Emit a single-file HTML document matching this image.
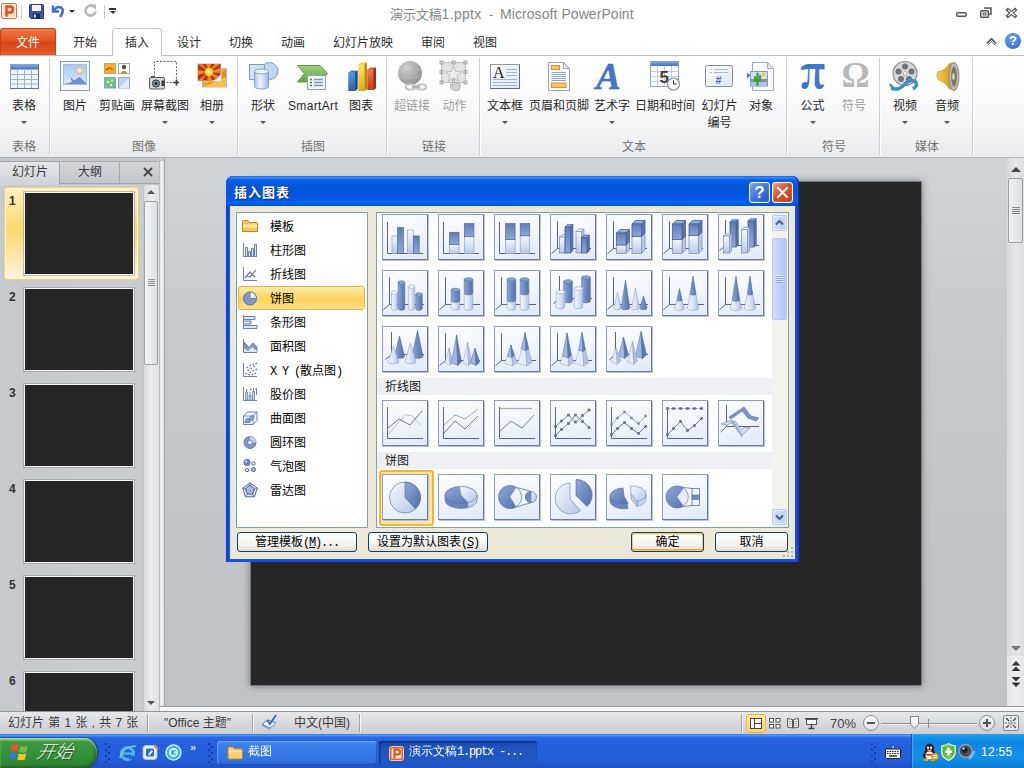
<!DOCTYPE html>
<html lang="zh-CN"><head><meta charset="utf-8"><title>演示文稿1.pptx - Microsoft PowerPoint</title>
<style>
*{box-sizing:border-box;margin:0;padding:0}
html,body{width:1024px;height:768px;overflow:hidden}
body{position:relative;background:#c6c9ce;font-family:"Liberation Sans","Noto Sans CJK SC",sans-serif;font-size:12px;color:#222}
.a{position:absolute}
svg{position:absolute;overflow:visible}
#titlebar{left:0;top:0;width:1024px;height:28px;background:#fff}
.ttl{left:390px;top:5px;font-size:13px;line-height:19px;color:#858585;white-space:pre}
#tabrow{left:0;top:28px;width:1024px;height:28px;background:#fff;border-bottom:1px solid #b9bcc1}
.tab{position:absolute;top:34px;line-height:18px;font-size:12px;color:#2a2a2a;white-space:nowrap;transform:translateX(-50%)}
#filetab{left:0;top:28px;width:56px;height:27px;background:linear-gradient(#f07a4a,#e2531f 45%,#d8431c 50%,#e55c25);border-radius:3px 3px 0 0;border:1px solid #c4441a;border-bottom:none}
#acttab{left:112px;top:28px;width:50px;height:28px;background:#fff;border:1px solid #c3c6cb;border-bottom:none;border-radius:4px 4px 0 0}
#ribbon{left:0;top:56px;width:1024px;height:102px;background:linear-gradient(#ffffff,#fcfcfd 40%,#f2f3f5 75%,#e8eaed);border-bottom:1px solid #aeb2b8}
.sep{position:absolute;top:58px;width:2px;height:97px;background:linear-gradient(90deg,#c9ccd1 50%,#fff 50%);opacity:.9}
.rl{position:absolute;top:98px;font-size:12px;color:#262626;white-space:nowrap;text-align:center;transform:translateX(-50%);line-height:16px}
.rl.dis{color:#9c9c9c}
.gl{position:absolute;top:139px;font-size:12px;color:#737373;white-space:nowrap;transform:translateX(-50%);line-height:16px}
.dd{position:absolute;top:121px;width:0;height:0;border-left:3px solid transparent;border-right:3px solid transparent;border-top:3px solid #555;margin-left:-3px}



#pane{left:0;top:158px;width:160px;height:554px;background:#c3c6cb}
#panetabs{left:0;top:161px;width:159px;height:23px;background:linear-gradient(#d3d5d9,#c3c6ca);border-top:1px solid #a9adb3;border-bottom:1px solid #a3a7ad}
#ptab1{left:0;top:161px;width:60px;height:24px;background:linear-gradient(#e4e6e9,#cfd2d6);border:1px solid #a0a4aa;border-left:none;border-bottom:none;border-radius:0 3px 0 0}
#ptab2{left:60px;top:162px;width:60px;height:22px;border-right:1px solid #a6aab0}
.ptx{position:absolute;top:164px;font-size:12px;line-height:16px;color:#3a3a3a;transform:translateX(-50%);white-space:nowrap}
#panebody{left:0;top:185px;width:143px;height:527px;background:linear-gradient(90deg,#c6c9ce,#c9ccd1)}
#panesb{left:143px;top:185px;width:16px;height:527px;background:linear-gradient(90deg,#d9dbdf,#e9ebee 50%,#dfe1e5);border-left:1px solid #c0c3c8}
#panesbthumb{left:144px;top:201px;width:14px;height:164px;border:1px solid #9da1a8;border-radius:2px;background:linear-gradient(90deg,#f4f5f7,#dcdfe3)}
#split{left:159px;top:161px;width:5px;height:546px;background:linear-gradient(90deg,#e3e5e8,#f2f3f5 40%,#dfe1e4);border-left:1px solid #b7bac0}
.thumb{position:absolute;left:24px;width:110px;height:83px;background:#262626;border:1px solid #f6f6f6;box-shadow:0 0 0 1px rgba(140,143,150,.55)}
.tnum{position:absolute;left:9px;font-size:12px;font-weight:bold;color:#333;line-height:13px;margin-top:1px}
#sel{left:4px;top:187px;width:135px;height:93px;border:1px solid #ecd27e;border-radius:3px;background:linear-gradient(#fdf0c0,#fbd970 45%,#f9e6a8 75%,#fdf6dd);box-shadow:inset 0 0 0 1px #fff6d8}
.tri{position:absolute;width:0;height:0;border-left:4px solid transparent;border-right:4px solid transparent}


#work{left:164px;top:158px;width:843px;height:549px;background:linear-gradient(#cfd2d6,#c6c9cd 30%,#c1c4c8 70%,#bfc2c6);border-left:1px solid #a2a5aa}
#workbot{left:160px;top:706px;width:864px;height:5px;background:#f6f7f8;border-top:1px solid #999ca1}
#slide{left:251px;top:182px;width:670px;height:503px;background:#262626;box-shadow:0 0 7px 1px rgba(50,52,60,.5),0 0 0 1px rgba(110,112,118,.6)}
#vsb{left:1007px;top:158px;width:17px;height:549px;background:linear-gradient(90deg,#d6d9dd,#e4e6e9 50%,#dcdee2)}
#vsbthumb{left:1008px;top:178px;width:15px;height:65px;border:1px solid #9a9ea5;border-radius:2px;background:linear-gradient(90deg,#f1f2f4,#dcdfe3)}
#vsbnav{left:1007px;top:656px;width:17px;height:51px;background:linear-gradient(90deg,#e1e3e6,#eceef0 50%,#e3e5e8)}


#status{left:0;top:711px;width:1024px;height:23px;background:linear-gradient(#e6e7ea,#d9dbde 45%,#cbcdd0);border-top:1px solid #909398}
.st{position:absolute;top:715px;font-size:12px;line-height:17px;color:#3a3a3a;white-space:pre}
.ssep{position:absolute;top:714px;width:2px;height:18px;background:linear-gradient(90deg,#9fa3a9 50%,#f4f5f6 50%)}
#vsel{left:746px;top:714px;width:20px;height:19px;border:1px solid #e5bd4e;border-radius:2px;background:linear-gradient(#fde9a6,#fbd467)}
.circ{position:absolute;width:16px;height:16px;border-radius:8px;border:1px solid #8a8e95;background:linear-gradient(#fdfdfd,#d9dbdf)}


#taskbar{left:0;top:734px;width:1024px;height:34px;background:linear-gradient(#3d83ee 0,#2b6ce4 3px,#245edb 8px,#2560dc 24px,#1f52c4 34px)}
#tbtop{left:0;top:734px;width:1024px;height:3px;background:linear-gradient(#3a7be8,#4e92f3 50%,#3173e6)}
#start{left:0;top:738px;width:97px;height:30px;border-radius:0 12px 12px 0/0 15px 15px 0;background:linear-gradient(#5dab5b 0,#3f9a3e 12%,#35913a 50%,#2f8a35 80%,#2a7a30);box-shadow:inset 0 2px 2px rgba(190,235,180,.7),inset -2px -1px 3px rgba(20,70,20,.6),1px 0 2px rgba(0,0,40,.5)}
#starttx{left:37px;top:740px;font-size:18px;line-height:24px;color:#fff;font-style:italic;transform:skewX(-12deg);text-shadow:1px 1px 1px rgba(0,0,0,.5);white-space:nowrap;font-family:"Liberation Sans","Noto Sans CJK SC",sans-serif;font-weight:300}
.tbtn{position:absolute;top:741px;height:24px;border-radius:3px;color:#fff;font-size:12px;line-height:22px;white-space:pre;font-family:"Liberation Mono","WenQuanYi Zen Hei","Noto Sans CJK SC",monospace}
#tb1{left:217px;width:160px;background:linear-gradient(#4a8df2,#3a7de8 20%,#3273e2 80%,#2a65d4);box-shadow:inset 1px 1px 1px rgba(255,255,255,.25),inset -1px -1px 1px rgba(0,0,60,.25)}
#tb2{left:379px;width:158px;background:linear-gradient(#1a4aa8,#1f54bd 30%,#2259c4);box-shadow:inset 1px 1px 2px rgba(0,0,50,.5)}
#tray{left:911px;top:734px;width:113px;height:34px;background:linear-gradient(#1fa0ee 0,#1593e9 3px,#0f86e0 8px,#1290e8 24px,#0e7bd0 34px);border-left:1px solid #0b5cb0;box-shadow:inset 1px 0 1px rgba(120,200,255,.5)}
#clock{left:981px;top:745px;font-size:12px;line-height:14px;color:#fff;white-space:nowrap;letter-spacing:.3px}
.dots{position:absolute;top:743px;width:2px;height:22px;background:repeating-linear-gradient(#173fa0 0,#173fa0 2px,transparent 2px,transparent 6px)}
.dots.b{margin-left:3px;margin-top:3px;height:19px}


.hw{letter-spacing:-1.2px}
#dlg{left:226px;top:176px;width:573px;height:386px;border-radius:8px 8px 0 0;background:linear-gradient(90deg,#0a35d8,#1450e4 3px,#1450e4 570px,#0a35d8)}
#dlgtitle{left:226px;top:176px;width:573px;height:30px;border-radius:7px 7px 0 0;background:linear-gradient(#0a5fe9 0,#3b8cf5 4%,#0a5de6 14%,#0553d8 40%,#0457e2 70%,#0661ee 88%,#0352d0 100%);box-shadow:inset 1px 0 0 #1f4fd8,inset -1px 0 0 #0a2fb5}
#dlgtx{left:234px;top:183.5px;font-size:13px;font-weight:bold;color:#fff;line-height:18px;text-shadow:1px 1px 1px #0a2a7a;white-space:nowrap;letter-spacing:1px}
#dlgbody{left:230px;top:206px;width:565px;height:353px;background:#ece9d8}
.tbb{position:absolute;top:182px;width:21px;height:21px;border:1px solid #fff;border-radius:3px}
#dhelp{left:749px;background:linear-gradient(135deg,#7aa6f2,#3a72e2 50%,#2457cc);box-shadow:inset 0 0 2px rgba(255,255,255,.3)}
#dclose{left:772px;background:linear-gradient(135deg,#f0a088,#d8502c 45%,#c23a18);box-shadow:inset 0 0 2px rgba(255,255,255,.3)}
#llist{left:236px;top:212px;width:132px;height:316px;background:#fff;border:1px solid #7f9db9}
#gal{left:376px;top:212px;width:413px;height:316px;background:#fff;border:1px solid #7f9db9}
.li{position:absolute;left:270px;font-size:12px;line-height:16px;color:#000;white-space:pre;font-family:"Liberation Mono","Noto Sans CJK SC",monospace}
#lsel{left:238px;top:286px;width:127px;height:24px;border:1px solid #e3b648;border-radius:3px;background:linear-gradient(#fde9a8,#fbd768 50%,#fbd25a 55%,#fce08a)}
.gi{position:absolute;width:46px;height:46px;border:1px solid #8e9bc2;border-right-color:#6b79a8;border-bottom-color:#6b79a8;background:linear-gradient(165deg,#fcfdff,#f1f5fc 50%,#e0e9f7);box-shadow:1px 1px 0 #b9c1d8}
.gi svg{left:-1px;top:-1px}
.gh{position:absolute;left:377px;width:395px;height:17px;background:#eff0f4;font-size:12px;line-height:19px;padding-left:8px;color:#1a1a1a;font-family:"Liberation Sans","Noto Sans CJK SC",sans-serif}
#gsel{left:379px;top:470px;width:55px;height:56px;border:2px solid #efb738;border-radius:3px;background:#fce69c}
#gsb{left:772px;top:213px;width:16px;height:314px;background:#f3f2ea}
.sbtn{position:absolute;left:772px;width:15px;height:16px;border:1px solid #b8c8ee;border-radius:2px;background:linear-gradient(90deg,#d5e0fa,#bccdf6);box-shadow:inset 0 0 0 1px #e6edfc}
#gsbthumb{left:772px;top:238px;width:15px;height:82px;border:1px solid #b4c5ee;border-radius:2px;background:linear-gradient(90deg,#d3defa,#bccdf6 60%,#b3c5f2)}
.btn{position:absolute;top:532px;height:20px;border:1px solid #0f3d78;border-radius:3px;background:linear-gradient(#ffffff,#f4f3ee 60%,#e2dfd2);font-size:12px;line-height:20px;text-align:center;color:#000;white-space:pre;font-family:"Liberation Mono","Noto Sans CJK SC",monospace}
#bok{box-shadow:inset 0 0 0 1px #f3c960,inset 0 -2px 0 0 #e8a52e,inset 0 2px 0 0 #fde8a8}

</style></head><body>
<div id="titlebar" class="a"></div>
<div class="a ttl"><span style="letter-spacing:-.1px">演示文稿</span><span style="font-size:14px;letter-spacing:.3px">1.pptx</span></div>
<div class="a ttl" style="left:489px">-</div>
<div class="a ttl" style="left:500px;font-size:14px;letter-spacing:.07px">Microsoft PowerPoint</div>
<div id="tabrow" class="a"></div>
<div id="filetab" class="a"></div>
<div id="acttab" class="a"></div>
<div class="tab" style="left:28px;color:#fff">文件</div>
<div class="tab" style="left:85px">开始</div>
<div class="tab" style="left:137px">插入</div>
<div class="tab" style="left:189px">设计</div>
<div class="tab" style="left:241px">切换</div>
<div class="tab" style="left:293px">动画</div>
<div class="tab" style="left:363px">幻灯片放映</div>
<div class="tab" style="left:433px">审阅</div>
<div class="tab" style="left:485px">视图</div>
<div id="ribbon" class="a"></div>
<div class="sep" style="left:49px"></div>
<div class="sep" style="left:237px"></div>
<div class="sep" style="left:386px"></div>
<div class="sep" style="left:479px"></div>
<div class="sep" style="left:786px"></div>
<div class="sep" style="left:879px"></div>
<div class="sep" style="left:972px"></div>
<div class="rl" style="left:24px">表格</div>
<div class="dd" style="left:24px"></div>
<div class="rl" style="left:75px">图片</div>
<div class="rl" style="left:117px">剪贴画</div>
<div class="rl" style="left:165px">屏幕截图</div>
<div class="dd" style="left:165px"></div>
<div class="rl" style="left:212px">相册</div>
<div class="dd" style="left:212px"></div>
<div class="rl" style="left:263px">形状</div>
<div class="dd" style="left:263px"></div>
<div class="rl" style="left:313px"><span style="letter-spacing:.35px">SmartArt</span></div>
<div class="rl" style="left:361px">图表</div>
<div class="rl dis" style="left:412px">超链接</div>
<div class="rl dis" style="left:454.5px">动作</div>
<div class="rl" style="left:505px">文本框</div>
<div class="dd" style="left:505px"></div>
<div class="rl" style="left:559px">页眉和页脚</div>
<div class="rl" style="left:612px">艺术字</div>
<div class="dd" style="left:612px"></div>
<div class="rl" style="left:665px">日期和时间</div>
<div class="rl" style="left:719.5px"><span style="line-height:17px">幻灯片<br>编号</span></div>
<div class="rl" style="left:761px">对象</div>
<div class="rl" style="left:812.5px">公式</div>
<div class="dd" style="left:812.5px"></div>
<div class="rl dis" style="left:854px">符号</div>
<div class="rl" style="left:905px">视频</div>
<div class="dd" style="left:905px"></div>
<div class="rl" style="left:947px">音频</div>
<div class="dd" style="left:947px"></div>
<div class="gl" style="left:24px">表格</div>
<div class="gl" style="left:144px">图像</div>
<div class="gl" style="left:313px">插图</div>
<div class="gl" style="left:434px">链接</div>
<div class="gl" style="left:634px">文本</div>
<div class="gl" style="left:834px">符号</div>
<div class="gl" style="left:927px">媒体</div>
<svg width="0" height="0" style="left:0;top:0"><defs>
<linearGradient id="sky" x1="0" y1="0" x2="0" y2="1"><stop offset="0" stop-color="#9fcbf2"/><stop offset="1" stop-color="#d9ecfb"/></linearGradient>
<linearGradient id="blu" x1="0" y1="0" x2="0" y2="1"><stop offset="0" stop-color="#7aa7e0"/><stop offset="1" stop-color="#3f6fc0"/></linearGradient>
<linearGradient id="cylg" x1="0" y1="0" x2="1" y2="0"><stop offset="0" stop-color="#a9c6ea"/><stop offset=".4" stop-color="#eef5fd"/><stop offset="1" stop-color="#9dbbe4"/></linearGradient>
<radialGradient id="glob" cx=".35" cy=".3" r=".8"><stop offset="0" stop-color="#d0d0d0"/><stop offset="1" stop-color="#8e8e8e"/></radialGradient>
<linearGradient id="grn" x1="0" y1="0" x2="0" y2="1"><stop offset="0" stop-color="#9fd07c"/><stop offset="1" stop-color="#5fa548"/></linearGradient>
<linearGradient id="gold" x1="0" y1="0" x2="1" y2="0"><stop offset="0" stop-color="#f3cf63"/><stop offset=".5" stop-color="#e8a92a"/><stop offset="1" stop-color="#c98a1a"/></linearGradient>
<linearGradient id="pg" x1="0" y1="0" x2="1" y2="1"><stop offset="0" stop-color="#ffffff"/><stop offset="1" stop-color="#dbe6f5"/></linearGradient>
<linearGradient id="cb" x1="0" y1="0" x2="0" y2="1"><stop offset="0" stop-color="#5a98dc"/><stop offset="1" stop-color="#2a5fa5"/></linearGradient>
<linearGradient id="cy" x1="0" y1="0" x2="0" y2="1"><stop offset="0" stop-color="#fbe368"/><stop offset="1" stop-color="#e3a91a"/></linearGradient>
<linearGradient id="cr" x1="0" y1="0" x2="0" y2="1"><stop offset="0" stop-color="#f0774a"/><stop offset="1" stop-color="#c63a18"/></linearGradient>
</defs></svg>
<svg style="left:1px;top:3px" width="16" height="16" viewBox="0 0 16 16"><rect x=".5" y=".5" width="15" height="15" rx="1.500" fill="#fdf1e8" stroke="#d9703c"/><rect x="2" y="2" width="12" height="12" fill="#f9d9c2"/><path d="M5.500 13.500V3.500H9Q12 3.500 12 6.500T9 9.500H5.500" fill="none" stroke="#d4511c" stroke-width="2.400"/></svg>
<div class="a" style="left:21px;top:5px;width:1px;height:14px;background:#c9ccd0"></div>
<svg style="left:29px;top:4px" width="15" height="15" viewBox="0 0 15 15"><path d="M.5 1.500Q.5 .5 1.500 .5H13.500Q14.500 .5 14.500 1.500V14.500H2L.5 13z" fill="#3f55a8" stroke="#2a3a80"/><rect x="3" y="1" width="9" height="6" fill="#f4f6fb"/><rect x="4" y="9.500" width="7" height="5" fill="#1f2a5c"/><rect x="5" y="10.500" width="2" height="3" fill="#cfd6ee"/></svg>
<svg style="left:51px;top:4px" width="14" height="14" viewBox="0 0 14 14"><path d="M2 1.500V7.500H8" fill="none" stroke="#3f6fd0" stroke-width="2.400"/><path d="M2.500 7Q6 1.500 10 3.500Q14 6.500 9 13" fill="none" stroke="#3f6fd0" stroke-width="2.600"/></svg>
<div class="dd" style="left:72px;top:10px;border-top-color:#333"></div>
<svg style="left:84px;top:4px" width="13" height="14" viewBox="0 0 13 14"><path d="M9.800 2.800A5 5 0 1 0 11.500 7.500" fill="none" stroke="#b4b7bc" stroke-width="2.600"/><path d="M6.500 .5H12V6z" fill="#b4b7bc"/></svg>
<div class="a" style="left:104px;top:5px;width:1px;height:14px;background:#c9ccd0"></div>
<div class="a" style="left:109px;top:8px;width:7px;height:1.500px;background:#333"></div><div class="dd" style="left:112.500px;top:11px;border-top-color:#333"></div>
<svg style="left:955px;top:5px" width="64" height="14" viewBox="0 0 64 14"><rect x="1.700" y="7.700" width="9.600" height="3.600" rx="1.200" fill="#fff" stroke="#555" stroke-width="1.400"/><path d="M29 3H36V9H33.500" fill="none" stroke="#555" stroke-width="1.500"/><rect x="25.700" y="5.700" width="7.600" height="6.600" rx=".8" fill="#fff" stroke="#555" stroke-width="1.400"/><rect x="28" y="8" width="3" height="2" fill="none" stroke="#555" stroke-width="1"/><path d="M53 5L60 11M60 5L53 11" stroke="#555" stroke-width="3.600" stroke-linecap="square"/><path d="M53.300 5.300L59.700 10.700M59.700 5.300L53.300 10.700" stroke="#fff" stroke-width="1.200" stroke-linecap="square"/></svg>
<svg style="left:986px;top:37px" width="11" height="9" viewBox="0 0 11 9"><path d="M1.500 7L5.500 2.500L9.500 7" fill="none" stroke="#555" stroke-width="2.800" stroke-linejoin="round"/><path d="M2.200 6.800L5.500 3.300L8.800 6.800" fill="none" stroke="#fff" stroke-width="1" stroke-linejoin="round"/></svg>
<div class="a" style="left:1005px;top:33px;width:16px;height:16px;border-radius:8px;background:radial-gradient(circle at 40% 30%,#6fa0e8,#2f66c4);color:#fff;font-weight:bold;font-size:13px;line-height:16px;text-align:center">?</div>
<svg style="left:10px;top:64px" width="29" height="25" viewBox="0 0 29 25"><rect x=".5" y=".5" width="28" height="24" fill="#f1f5fb" stroke="#8fa1c4"/><rect x="1" y="1" width="27" height="4.500" fill="url(#blu)"/><path d="M1 10.500H28M1 15.500H28M1 20H28M7.500 5.500V24M14.500 5.500V24M21.500 5.500V24" stroke="#9eb0d0" stroke-width="1"/><path d="M.5 24.500H28.500V.5" fill="none" stroke="#5c6f9c"/></svg>
<svg style="left:60px;top:61px" width="30" height="30" viewBox="0 0 30 30"><rect x=".5" y=".5" width="29" height="29" fill="#f4f8fc" stroke="#8c9bb5"/><rect x="3.500" y="3.500" width="23" height="20" fill="url(#sky)" stroke="#a9bcd8"/><circle cx="19.500" cy="9.500" r="3" fill="#fde7c4" stroke="#f2a57a"/><path d="M4 23L10 15.500L14 19.500L19.500 16L26 22V23z" fill="#6f8fcf"/><path d="M4 23L10 15.500L12 21z" fill="#dfe8f6"/></svg>
<svg style="left:104px;top:63px" width="26" height="26" viewBox="0 0 26 26"><rect x=".5" y=".5" width="11" height="10" fill="#f6b21e" stroke="#b9a27a"/><path d="M2 7L6 4.500L9 7" stroke="#e2502a" stroke-width="1.600" fill="none"/><rect x="14.500" y=".5" width="11" height="10" fill="#fbfcfe" stroke="#9aa6bb"/><circle cx="20" cy="4" r="2.200" fill="#6b4a36"/><path d="M16 10.500Q20 5 24 10.500z" fill="#e8862c"/><rect x=".5" y="14.500" width="11" height="10.500" fill="#6fbf9a" stroke="#8aa6a0"/><path d="M3 18h2v2h-2zM7 16.500h2v2h-2zM6 21h2v2h-2z" fill="#f3ef8a"/><rect x="14.500" y="14.500" width="11" height="10.500" fill="#b9d2f3" stroke="#9aa6bb"/><path d="M15 25L25 15V25z" fill="#dce9fa"/></svg>
<svg style="left:149px;top:61px" width="31" height="29" viewBox="0 0 31 29"><path d="M5.500 16V.5H27.500V21.500H16" fill="none" stroke="#666" stroke-width="1" stroke-dasharray="2 1.500"/><path d="M24 21.500H30M27.500 18.500V24.500" stroke="#333" stroke-width="1.600"/><rect x=".5" y="16.500" width="15" height="11.500" rx="1.500" fill="#d7d9dd" stroke="#55585e"/><rect x="2" y="15" width="4" height="2" fill="#55585e"/><circle cx="7" cy="22.500" r="3.600" fill="#8c96a8" stroke="#33363c"/><circle cx="7" cy="22.500" r="1.500" fill="#1c1e22"/><rect x="12.500" y="19.500" width="2.500" height="5.500" fill="#33363c"/></svg>
<svg style="left:197px;top:63px" width="30" height="25" viewBox="0 0 30 25"><rect x="5.500" y="5.500" width="24" height="18.500" fill="#f0a62c" stroke="#b9bcc4"/><path d="M6 24L29 6V24z" fill="#e58e1c"/><path d="M6 24L29 14V24z" fill="#f6c04a"/><rect x=".5" y=".5" width="23.500" height="17.500" fill="#b8321a" stroke="#d5d7dc"/><path d="M12 9L1 1H5zM12 9L9 1H14zM12 9L18 1H23zM12 9L23.500 5V10zM12 9L23.500 14V17.500H20zM12 9L15 17.500H10zM12 9L5 17.500H1zM12 9L1 12V7z" fill="#f0861e"/><circle cx="12" cy="9" r="4.200" fill="#f8dc2a"/><circle cx="11.500" cy="8.500" r="2" fill="#fdf2a0"/><path d="M24 11V18H14.500Q20.500 17 24 11z" fill="#f4f4f4" stroke="#c9ccd2" stroke-width=".6"/></svg>
<svg style="left:249px;top:62px" width="30" height="28" viewBox="0 0 30 28"><circle cx="20.500" cy="9" r="8.500" fill="#c3d6f0" stroke="#8099c4"/><rect x=".5" y="2.500" width="15" height="15" fill="#d3e1f4" stroke="#8099c4"/><path d="M5.500 9.500V24.500A7 2.500 0 0 0 19.500 24.500V9.500z" fill="url(#cylg)" stroke="#7f9fd0"/><ellipse cx="12.500" cy="9.500" rx="7" ry="2.500" fill="#eef5fd" stroke="#7f9fd0"/></svg>
<svg style="left:297px;top:65px" width="31" height="25" viewBox="0 0 31 25"><path d="M.5 .5H23L30.500 8.500L23 17H.5L7.500 8.500z" fill="url(#grn)" stroke="#5a9a45"/><rect x="10.500" y="10.500" width="18" height="14" fill="#f2f6f3" stroke="#8fa3ad"/><path d="M13 14.500h2M13 17.500h2M13 20.500h2" stroke="#4a7a48" stroke-width="1.400"/><path d="M17 14.500h9M17 17.500h9M17 20.500h9" stroke="#7f98b4" stroke-width="1.400"/></svg>
<svg style="left:348px;top:62px" width="28" height="29" viewBox="0 0 28 29"><path d="M.5 10.500L3.500 8.500H9.500V27L7 29H.5z" fill="#3b78c0"/><path d="M.5 10.500H7V29H.5z" fill="url(#cb)"/><path d="M7 10.500L9.500 8.500V27L7 29z" fill="#1f4c86"/><path d="M10.500 2.500L13.500 .5H19V27L16.500 29H10.500z" fill="#f2c82a"/><path d="M10.500 2.500H16.500V29H10.500z" fill="url(#cy)"/><path d="M16.500 2.500L19 .5V27L16.500 29z" fill="#b88a10"/><path d="M19.500 7.500L22.500 5.500H28V26L25.500 28H19.500z" fill="#e0532a"/><path d="M19.500 7.500H25.500V28H19.500z" fill="url(#cr)"/><path d="M25.500 7.500L28 5.500V26L25.500 28z" fill="#9c2c12"/></svg>
<svg style="left:397px;top:61px" width="30" height="30" viewBox="0 0 30 30"><circle cx="13" cy="12" r="12" fill="url(#glob)"/><path d="M3 8Q13 14 23 8M2 15Q13 20 24 15" fill="none" stroke="#b9b9b9" stroke-width=".8"/><rect x="9" y="23.500" width="9" height="5" rx="2.500" fill="none" stroke="#c4c4c4" stroke-width="2.200"/><rect x="20" y="23.500" width="9" height="5" rx="2.500" fill="none" stroke="#c4c4c4" stroke-width="2.200"/><path d="M15 26H23" stroke="#b0b0b0" stroke-width="2"/></svg>
<svg style="left:440px;top:61px" width="27" height="30" viewBox="0 0 27 30"><rect x="1.500" y="1.500" width="24" height="20" fill="#e3e3e3" stroke="#a9a9a9" stroke-dasharray="2 1"/><path d="M13.500 5L15.800 10.500L21.500 11L17 14.500L18.500 20L13.500 17L8.500 20L10 14.500L5.500 11L11.200 10.500z" fill="#ececec" stroke="#bdbdbd"/><g fill="#d8d8d8" stroke="#9a9a9a" stroke-width=".8"><rect x="0" y="0" width="3" height="3"/><rect x="12" y="0" width="3" height="3"/><rect x="24" y="0" width="3" height="3"/><rect x="0" y="9.500" width="3" height="3"/><rect x="24" y="9.500" width="3" height="3"/><rect x="0" y="20" width="3" height="3"/><rect x="24" y="20" width="3" height="3"/></g><path d="M12.500 18.500V24L10.500 23V26.500Q12 29.500 15 29.500H18Q20 29 20 25.500V22.500L14.500 21.500V18.500Q13.500 17.500 12.500 18.500z" fill="#d0d0d0" stroke="#a6a6a6" stroke-width=".8"/></svg>
<svg style="left:490px;top:64px" width="30" height="25" viewBox="0 0 30 25"><rect x=".5" y=".5" width="29" height="24" fill="url(#pg)" stroke="#8c98b4"/><path d="M.5 24.500H29.500V.5" fill="none" stroke="#5f6b8c"/><text x="3" y="13.500" font-family="Liberation Serif,serif" font-size="16" fill="#1a1a1a">A</text><path d="M16 5.500H27M16 8.500H27M16 11.500H27M3 15.500H27M3 18.500H27M3 21.500H27" stroke="#9db2d4" stroke-width="1"/></svg>
<svg style="left:548px;top:62px" width="22" height="29" viewBox="0 0 22 29"><path d="M.5 .5H15.500L21.500 6.500V28.500H.5z" fill="#fbfcfe" stroke="#9aa3b5"/><path d="M15.500 .5V6.500H21.500z" fill="#e3e7ee" stroke="#9aa3b5"/><rect x="3.500" y="3.500" width="8" height="4" fill="#f8c46a" stroke="#e0902a"/><rect x="3.500" y="21" width="14.500" height="4.500" fill="#f8c46a" stroke="#e0902a"/><path d="M3.500 10.500H18M3.500 12.500H18M3.500 14.500H18M3.500 16.500H18M3.500 18.500H18" stroke="#8ea6cf" stroke-width="1"/></svg>
<svg style="left:597px;top:61px" width="26" height="30" viewBox="0 0 26 30"><text x="-1" y="28" font-family="Liberation Serif,serif" font-size="37" font-style="italic" font-weight="bold" fill="#3f78c9" stroke="#2c5ea8" stroke-width=".5">A</text></svg>
<svg style="left:650px;top:61px" width="30" height="30" viewBox="0 0 30 30"><rect x=".5" y=".5" width="28" height="25" fill="#fff" stroke="#8fa1c4"/><rect x="1" y="1" width="27" height="4" fill="url(#blu)"/><path d="M1 10.500H28M1 15.500H28M1 20.500H28M7.500 5V25M14.500 5V25M21.500 5V25" stroke="#c3cde0"/><text x="9.500" y="21.500" font-family="Liberation Sans,sans-serif" font-size="17" font-weight="bold" fill="#3c3c3c">5</text><circle cx="23.500" cy="23" r="6" fill="#f7f7f7" stroke="#8a8d94" stroke-width="1.200"/><path d="M23.500 19.500V23H26.500" fill="none" stroke="#333" stroke-width="1"/></svg>
<svg style="left:705px;top:65px" width="28" height="22" viewBox="0 0 28 22"><rect x=".5" y=".5" width="27" height="21" rx="2" fill="url(#pg)" stroke="#7f8aa6"/><path d="M5 4.500H7M9 4.500H23M5 7.500H7M9 7.500H23" stroke="#a9b8d4"/><text x="10.500" y="18.500" font-family="Liberation Sans,sans-serif" font-size="11" font-weight="bold" fill="#4d6ea8">#</text></svg>
<svg style="left:747px;top:62px" width="27" height="29" viewBox="0 0 27 29"><path d="M5.500 .5H20.500L26.500 6.500V28.500H5.500z" fill="#f6f9fd" stroke="#a3adbf"/><path d="M20.500 .5V6.500H26.500z" fill="#dfe5ef" stroke="#a3adbf"/><rect x="3.500" y="9.500" width="17" height="14.500" fill="#cfe3f7" stroke="#8c9bb5"/><rect x="4" y="17" width="16" height="3" fill="#8d8f96"/><rect x="4" y="20" width="16" height="3.500" fill="#a7c4e6"/><circle cx="16.500" cy="12.500" r="2" fill="#f2c94a"/><path d="M10.500 23V11.500M8 18.500V15M13 17.500V14M8 18.500H13" stroke="#3f9a3a" stroke-width="2.200" fill="none" stroke-linecap="round"/><path d="M0 10.500L3.500 13.500L0 16.500z" fill="#3f78c9"/></svg>
<svg style="left:800px;top:62px" width="26" height="28" viewBox="0 0 26 28"><text x="0" y="26" font-family="Noto Serif CJK SC,serif" font-size="43" font-weight="900" textLength="25.5" lengthAdjust="spacingAndGlyphs" fill="#3f78c9">π</text></svg>
<svg style="left:842px;top:64px" width="26" height="24" viewBox="0 0 26 24"><text x="-.5" y="23" font-family="Liberation Serif,DejaVu Serif,serif" font-size="35" font-weight="bold" fill="#b8b8b8">Ω</text></svg>
<svg style="left:889px;top:61px" width="31" height="30" viewBox="0 0 31 30"><circle cx="16" cy="12.500" r="12" fill="#d6d7da" stroke="#8b8d92" stroke-width="1.200"/><circle cx="16" cy="12.500" r="2" fill="#eee" stroke="#999" stroke-width=".6"/><g fill="#6f7278"><circle cx="16" cy="5.500" r="3"/><circle cx="9.500" cy="10.500" r="3"/><circle cx="22.500" cy="10.500" r="3"/><circle cx="12" cy="18" r="3"/><circle cx="20" cy="18" r="3"/></g><path d="M2 27.500Q10 30 16 23Q21 17.500 26 20.500Q30 24 24 28" fill="none" stroke="#3c8fc8" stroke-width="3.400"/><path d="M1 23Q4 29 10 28" fill="none" stroke="#3c8fc8" stroke-width="2.600"/></svg>
<svg style="left:936px;top:62px" width="24" height="29" viewBox="0 0 24 29"><path d="M1 13Q1 9 4.500 9Q8 9 13.500 1.500L19 .5Q17 14 19 28.500L13.500 27Q8 19 4.500 19Q1 18 1 13z" fill="url(#gold)" stroke="#c48a1c" stroke-width=".6"/><ellipse cx="18" cy="14.500" rx="5" ry="14" fill="#b9b9ad" stroke="#8e8e80"/><ellipse cx="18" cy="14.500" rx="2.800" ry="10" fill="#77776c"/><ellipse cx="17.500" cy="14.500" rx="1.200" ry="3.500" fill="#d9d9cc"/></svg>
<div id="pane" class="a"></div><div id="panebody" class="a"></div>
<div id="panetabs" class="a"></div><div id="ptab1" class="a"></div><div id="ptab2" class="a"></div>
<div class="ptx" style="left:30px">幻灯片</div><div class="ptx" style="left:90px">大纲</div>
<svg style="left:143px;top:167px" width="10" height="10" viewBox="0 0 10 10"><path d="M1 1L9 9M9 1L1 9" stroke="#444" stroke-width="1.8" fill="none"/></svg>
<div id="sel" class="a"></div>
<div class="thumb" style="top:192px;height:83px"></div><div class="tnum" style="top:194px">1</div>
<div class="thumb" style="top:288px;height:83px"></div><div class="tnum" style="top:290px">2</div>
<div class="thumb" style="top:384px;height:83px"></div><div class="tnum" style="top:386px">3</div>
<div class="thumb" style="top:480px;height:83px"></div><div class="tnum" style="top:482px">4</div>
<div class="thumb" style="top:576px;height:83px"></div><div class="tnum" style="top:578px">5</div>
<div class="thumb" style="top:672px;height:40px"></div><div class="tnum" style="top:674px">6</div>
<div id="panesb" class="a"></div><div id="panesbthumb" class="a"></div>
<div class="tri" style="left:147px;top:190px;border-bottom:4px solid #555"></div>
<div class="tri" style="left:147px;top:701px;border-top:4px solid #555"></div>
<svg style="left:148px;top:279px" width="7" height="7" viewBox="0 0 7 7"><path d="M0 .5H7M0 2.5H7M0 4.5H7M0 6.5H7" stroke="#8d9198" stroke-width="1"/></svg>
<div id="split" class="a"></div>
<div id="work" class="a"></div><div id="slide" class="a"></div>
<div id="vsb" class="a"></div><div id="vsbthumb" class="a"></div><div id="vsbnav" class="a"></div>
<div class="tri" style="left:1011px;top:167px;border-left-width:5px;border-right-width:5px;border-bottom:5px solid #444"></div>
<svg style="left:1012px;top:207px" width="8" height="7" viewBox="0 0 8 7"><path d="M0 .5H8M0 2.5H8M0 4.5H8M0 6.5H8" stroke="#80848b" stroke-width="1"/></svg>
<div class="tri" style="left:1011px;top:646px;border-left-width:5px;border-right-width:5px;border-top:5px solid #777"></div>
<svg style="left:1011px;top:661px" width="10" height="27" viewBox="0 0 10 27"><path d="M5 0L9.5 4.5H.5zM5 5.5L9.5 10H.5zM.5 16H9.5L5 20.5zM.5 21.5H9.5L5 26z" fill="#333"/></svg>
<div id="workbot" class="a"></div>
<div id="status" class="a"></div>
<div class="st" style="left:8px;word-spacing:.9px">幻灯片 第 1 张 , 共 7 张</div>
<div class="ssep" style="left:147px"></div>
<div class="ssep" style="left:252px"></div>
<div class="ssep" style="left:359px"></div>
<div class="ssep" style="left:741px"></div>
<div class="st" style="left:164px">"Office 主题"</div>
<div class="st" style="left:294px">中文(中国)</div>
<svg style="left:261px;top:714px" width="18" height="17" viewBox="0 0 18 17"><path d="M1 10L7 6L15 9L9 14z" fill="#fff" stroke="#5b7fb8" stroke-width="1"/><path d="M1 10V12L9 16V14z" fill="#7fa0d0"/><path d="M9 14V16L15 11V9z" fill="#a9c0e2"/><path d="M6 6L9 10L15 1" fill="none" stroke="#3c6bc0" stroke-width="2"/></svg>
<div id="vsel" class="a"></div>
<svg style="left:750px;top:718px" width="12" height="11" viewBox="0 0 12 11"><rect x=".5" y=".5" width="11" height="10" fill="#fff" stroke="#444"/><path d="M4.5 1V10M4.5 5.5H11" stroke="#444" fill="none"/></svg>
<svg style="left:769px;top:718px" width="12" height="11" viewBox="0 0 12 11"><g fill="#fff" stroke="#555"><rect x=".5" y=".5" width="4" height="3.5"/><rect x="7" y=".5" width="4" height="3.5"/><rect x=".5" y="6.5" width="4" height="3.5"/><rect x="7" y="6.5" width="4" height="3.5"/></g></svg>
<svg style="left:787px;top:717px" width="12" height="12" viewBox="0 0 12 12"><path d="M.5 1.5L5.5 2.5V11L.5 10zM11.5 1.5L6.5 2.5V11L11.5 10z" fill="#fff" stroke="#555"/><path d="M2 4L4.5 4.5M2 6L4.5 6.5M2 8L4.5 8.5M10 4L7.5 4.5M10 6L7.5 6.5M10 8L7.5 8.5" stroke="#777" stroke-width=".8"/></svg>
<svg style="left:805px;top:718px" width="13" height="12" viewBox="0 0 13 12"><path d="M0 .7H13" stroke="#444" stroke-width="1.4"/><rect x="1.5" y="1.5" width="10" height="5" fill="#fff" stroke="#555"/><path d="M6.5 7V10M3.5 10.5H9.5" stroke="#444" stroke-width="1.4"/></svg>
<div class="st" style="left:830px;font-size:13px;color:#444">70%</div>
<div class="circ" style="left:863px;top:715px"></div><div class="circ" style="left:979px;top:715px"></div>
<svg style="left:863px;top:715px" width="140" height="16" viewBox="0 0 140 16"><path d="M4 8H12" stroke="#555" stroke-width="2"/><path d="M120 8H128M124 4V12" stroke="#555" stroke-width="2"/><path d="M18 8.5H114" stroke="#888c93" stroke-width="1"/><path d="M18 9.5H114" stroke="#f5f5f5" stroke-width="1"/><path d="M65.5 4V13" stroke="#888c93"/><path d="M47.5 1.5H55.5V9L51.5 13.5L47.5 9z" fill="#f2f3f5" stroke="#7d8188"/></svg>
<svg style="left:1003px;top:715px" width="16" height="16" viewBox="0 0 16 16"><rect x=".5" y=".5" width="15" height="15" rx="2" fill="#e9ebee" stroke="#7d8188"/><path d="M8 2V14M2 8H14" stroke="#666" stroke-dasharray="2 1"/><path d="M3 3L6 6M13 3L10 6M3 13L6 10M13 13L10 10" stroke="#444" stroke-width="1.3"/></svg>
<div id="taskbar" class="a"></div><div id="tbtop" class="a"></div>
<div id="start" class="a"></div>
<svg style="left:10px;top:743px" width="20" height="19" viewBox="0 0 20 19"><path d="M2 2Q5 .5 9 2.5L7.6 8.5Q4 6.8 .6 8.2z" fill="#e8542c"/><path d="M10.5 3Q14 4.5 18 2.8L16.5 9Q13 10.4 9 8.8z" fill="#6fbf44"/><path d="M.3 9.8Q4 8.4 7.3 10L6 16Q2.8 14.4 -1 15.8z" fill="#3a78d8"/><path d="M8.7 10.4Q12.5 12 16.2 10.4L14.8 16.5Q11 18 7.3 16.4z" fill="#f4c530"/></svg>
<div id="starttx" class="a">开始</div>
<div class="dots" style="left:105px"></div><div class="dots b" style="left:105px"></div><div class="dots" style="left:208px"></div><div class="dots b" style="left:208px"></div>
<svg style="left:119px;top:744px" width="18" height="18" viewBox="0 0 18 18"><circle cx="8.5" cy="9.5" r="6" fill="none" stroke="#4fb2f2" stroke-width="3"/><path d="M3 9.5H14" stroke="#4fb2f2" stroke-width="2.4"/><path d="M10 13.5H15" stroke="#245edb" stroke-width="3.4"/><path d="M1 14Q3 3 17 2" fill="none" stroke="#7cc8f6" stroke-width="1.5"/></svg>
<svg style="left:142px;top:744px" width="17" height="17" viewBox="0 0 17 17"><rect x="1" y="1.5" width="14" height="14" rx="3" fill="#e9f1fb" stroke="#9fc4ee"/><rect x="4" y="4.5" width="8" height="8" rx="1.5" fill="#2d6ad0"/><path d="M6 10.5L9.5 6L11 7.2L7.5 11.5z" fill="#fff"/><path d="M12 2L16 5" stroke="#e08a30" stroke-width="2"/></svg>
<svg style="left:165px;top:744px" width="17" height="17" viewBox="0 0 17 17"><circle cx="8.5" cy="8.5" r="7.5" fill="#35b4e6" stroke="#c9ecfa" stroke-width="1.6"/><circle cx="8.5" cy="8.5" r="4.5" fill="#dff4fc"/><path d="M7 6V11M10.5 6L7.5 8.5L10.5 11" stroke="#2a9bd0" stroke-width="1.4" fill="none"/></svg>
<div class="a" style="left:190px;top:741px;color:#cfe1fb;font-size:11px;line-height:12px;font-weight:bold">»</div>
<div id="tb1" class="tbtn"></div><div id="tb2" class="tbtn"></div>
<svg style="left:227px;top:746px" width="17" height="14" viewBox="0 0 17 14"><path d="M1 2.5Q1 1 2.5 1H6L7.5 2.8H14Q15.5 2.8 15.5 4.3V11.5Q15.5 13 14 13H2.5Q1 13 1 11.5z" fill="#f6d36a" stroke="#b58a1f"/><path d="M1.5 5.5H15" stroke="#fbe9a9" stroke-width="1.5"/></svg>
<div class="tbtn" style="left:248px">截图</div>
<svg style="left:389px;top:746px" width="15" height="15" viewBox="0 0 15 15"><rect x=".5" y=".5" width="14" height="14" rx="2" fill="#e0622d" stroke="#f7c9a6"/><rect x="2.5" y="2.5" width="10" height="10" fill="#fbe6d8"/><path d="M5.5 12V3.5H8.5Q11 3.5 11 6T8.5 8.5H5.5" fill="none" stroke="#d0501e" stroke-width="2"/></svg>
<div class="tbtn" style="left:409px">演示文稿<span class="hw">1.pptx -...</span></div>
<div class="dots" style="left:871px"></div><div class="dots b" style="left:871px"></div>
<svg style="left:885px;top:746px" width="16" height="13" viewBox="0 0 16 13"><path d="M8 0V3" stroke="#eee"/><rect x=".5" y="3" width="15" height="9.5" rx="1" fill="#f3f3f3" stroke="#222"/><path d="M2 5.5H14M2 7.5H14" stroke="#222" stroke-dasharray="1.5 1"/><path d="M4 10H12" stroke="#222" stroke-width="1.4"/></svg>
<div id="tray" class="a"></div>
<svg style="left:922px;top:743px" width="17" height="18" viewBox="0 0 17 18"><ellipse cx="7.5" cy="6" rx="4.5" ry="5.5" fill="#1a1a1a"/><ellipse cx="7.5" cy="12" rx="6.5" ry="5" fill="#1a1a1a"/><ellipse cx="7.5" cy="12.5" rx="4" ry="4" fill="#fff"/><path d="M2 9.5Q7.5 12.5 13 9.5L12.5 11.5Q7.5 14 2.5 11.5z" fill="#e0321e"/><ellipse cx="6" cy="4.8" rx="1" ry="1.5" fill="#fff"/><ellipse cx="9" cy="4.8" rx="1" ry="1.5" fill="#fff"/><ellipse cx="7.5" cy="7.5" rx="2.4" ry="1" fill="#f2a21a"/><ellipse cx="4" cy="16.8" rx="2.6" ry="1.2" fill="#f2a21a"/><ellipse cx="11" cy="16.8" rx="2.6" ry="1.2" fill="#f2a21a"/><circle cx="13" cy="13.5" r="3.6" fill="#f5b12c" stroke="#a86a0c" stroke-width=".6"/><path d="M11 12.5H15M11 14.5H15" stroke="#fff" stroke-width="1"/></svg>
<svg style="left:941px;top:743px" width="15" height="18" viewBox="0 0 15 18"><path d="M7.5 .8Q11 2.8 14.2 2.8V9Q14.2 14.5 7.5 17.3Q.8 14.5 .8 9V2.8Q4 2.8 7.5 .8z" fill="#58b83a" stroke="#f1f7e6" stroke-width="1.3"/><path d="M7.500 1.5V16.500" stroke="#8fd45e" stroke-width="5" opacity=".5"/><path d="M7.500 5V12.500M4 8.800H11" stroke="#fff" stroke-width="2.400"/></svg>
<svg style="left:958px;top:743px" width="18" height="18" viewBox="0 0 18 18"><circle cx="7.500" cy="8" r="6.500" fill="#4a4f58" stroke="#9aa1ad" stroke-width="1.400"/><circle cx="6.500" cy="7" r="3" fill="#1d2026"/><circle cx="5.500" cy="5.500" r="1.200" fill="#c8ccd4"/><path d="M11 16Q15 13 16.500 8" stroke="#8fc0f2" stroke-width="1.600" fill="none"/></svg>
<div id="clock" class="a">12:55</div>
<svg width="0" height="0" style="left:0;top:0"><defs>
<linearGradient id="gd" x1="0" y1="0" x2="1" y2="0"><stop offset="0" stop-color="#93abd6"/><stop offset=".45" stop-color="#6f8cc3"/><stop offset="1" stop-color="#5473ad"/></linearGradient>
<linearGradient id="gl" x1="0" y1="0" x2="1" y2="0"><stop offset="0" stop-color="#f0f5fc"/><stop offset=".5" stop-color="#d9e4f5"/><stop offset="1" stop-color="#abc0e3"/></linearGradient>
<linearGradient id="gdv" x1="0" y1="0" x2="0" y2="1"><stop offset="0" stop-color="#5f7cb6"/><stop offset="1" stop-color="#8fa8d6"/></linearGradient>
<linearGradient id="glv" x1="0" y1="0" x2="0" y2="1"><stop offset="0" stop-color="#f4f8fd"/><stop offset="1" stop-color="#b7c9e7"/></linearGradient>
<linearGradient id="gdd" x1="0" y1="0" x2="1" y2="1"><stop offset="0" stop-color="#90a9d6"/><stop offset="1" stop-color="#4f6eaa"/></linearGradient>
<linearGradient id="gld" x1="0" y1="0" x2="1" y2="1"><stop offset="0" stop-color="#f6f9fe"/><stop offset="1" stop-color="#b3c6e6"/></linearGradient>
</defs></svg>
<div id="dlg" class="a"></div><div id="dlgtitle" class="a"></div><div id="dlgbody" class="a"></div>
<div id="dlgtx" class="a">插入图表</div>
<div id="dhelp" class="tbb"></div><div id="dclose" class="tbb"></div>
<div class="a" style="left:749px;top:182px;width:21px;height:21px;line-height:21px;text-align:center;color:#fff;font-weight:bold;font-size:17px">?</div>
<svg style="left:772px;top:182px" width="21" height="21" viewBox="0 0 21 21"><path d="M6 6L15 15M15 6L6 15" stroke="#fff" stroke-width="2" stroke-linecap="square"/></svg>
<div id="llist" class="a"></div><div id="lsel" class="a"></div>
<svg style="left:242px;top:217.5px" width="16" height="16" viewBox="0 0 16 16"><path d="M.5 3.500Q.5 2.500 1.500 2.500H6L7.500 4.500H14.500Q15.500 4.500 15.500 5.500V13.500H.5z" fill="#f3c75a" stroke="#b98a22"/><path d="M1 6.500H15V9.500H1z" fill="#fbe7a6"/></svg>
<div class="li" style="top:219.5px">模板</div>
<svg style="left:242px;top:241.5px" width="16" height="16" viewBox="0 0 16 16"><path d="M1.500 1V14.500H15" fill="none" stroke="#6b80b4"/><path d="M3.500 14V5.500H5.500V14M6.500 14V9.500H8.500V14M9.500 14V6.500H11.500V14M12.500 14V2.500H14.500V14" fill="#dfe7f5" stroke="#6b80b4"/></svg>
<div class="li" style="top:243.5px">柱形图</div>
<svg style="left:242px;top:265.5px" width="16" height="16" viewBox="0 0 16 16"><path d="M1.500 1V14.500H15" fill="none" stroke="#6b80b4"/><path d="M3 12L8 6L13 11M4 10L8 11L14 4" fill="none" stroke="#6b80b4" stroke-width="1.200"/></svg>
<div class="li" style="top:267.5px">折线图</div>
<svg style="left:242px;top:289.5px" width="16" height="16" viewBox="0 0 16 16"><circle cx="8" cy="8.500" r="6.500" fill="#7f97c9" stroke="#5b72a8"/><path d="M8 8.500V2A6.500 6.500 0 0 1 14.500 8.500z" fill="#eef2fa" stroke="#5b72a8" stroke-width=".8"/></svg>
<div class="li" style="top:291.5px">饼图</div>
<svg style="left:242px;top:313.5px" width="16" height="16" viewBox="0 0 16 16"><path d="M1.500 1V15" stroke="#6b80b4"/><path d="M2 2.500H13V5.500H2M2 7H9V10H2M2 11.500H15V14.500H2" fill="#dfe7f5" stroke="#6b80b4"/></svg>
<div class="li" style="top:315.5px">条形图</div>
<svg style="left:242px;top:337.5px" width="16" height="16" viewBox="0 0 16 16"><path d="M1.500 1V14.500H15" fill="none" stroke="#6b80b4"/><path d="M2 4L7 9.500L11 5L15 9V14H2z" fill="#7f97c9" stroke="#5b72a8" stroke-width=".8"/><path d="M2 10L6 13L10 9L15 13V14H2z" fill="#dfe7f5"/></svg>
<div class="li" style="top:339.5px">面积图</div>
<svg style="left:242px;top:361.5px" width="16" height="16" viewBox="0 0 16 16"><path d="M1.500 1V14.500H15" fill="none" stroke="#6b80b4"/><path d="M3.500 11.500h1.400M5.500 8.500h1.400M4.500 5.500h1.400M7.500 10.500h1.400M8.500 6.500h1.400M10.500 8.500h1.400M11.500 4.500h1.400M12.500 11.500h1.400M6.500 12.500h1.400M9.500 12.500h1.400M7.500 3.500h1.400M10.500 2.500h1.400M13.500 7.500h1.400M13.500 1.500h1.400" stroke="#4f66a0" stroke-width="1.400"/></svg>
<div class="li" style="top:363.5px"><span class="hw">X Y (</span>散点图<span class="hw">)</span></div>
<svg style="left:242px;top:385.5px" width="16" height="16" viewBox="0 0 16 16"><path d="M1.500 1V14.500H15" fill="none" stroke="#6b80b4"/><path d="M4.500 3V14M8 6V14M11.500 2V14M14.500 4V9" stroke="#6b80b4"/><path d="M3.500 6.500H5.500V14H3.500zM7 9.500H9V14H7zM10.500 5.500H12.500V14H10.500z" fill="#c9d6ee" stroke="#6b80b4" stroke-width=".8"/><path d="M8 3.500h1.500M13.500 3h1.500" stroke="#4f66a0" stroke-width="1.400"/></svg>
<div class="li" style="top:387.5px">股价图</div>
<svg style="left:242px;top:409.5px" width="16" height="16" viewBox="0 0 16 16"><path d="M1.500 6L5.500 2H15V10.500L11 14.500H1.500z" fill="#eef2fa" stroke="#6b80b4"/><path d="M1.500 6H11V14.500M11 6L15 2" fill="none" stroke="#6b80b4" stroke-width=".8"/><path d="M3 12.500Q3.500 8 6 8.500T8 12.500zM7 10Q8.500 4.500 12 6Q12.500 9 9.500 10.500z" fill="#8ea6d6" stroke="#4f66a0" stroke-width=".7"/></svg>
<div class="li" style="top:411.5px">曲面图</div>
<svg style="left:242px;top:433.5px" width="16" height="16" viewBox="0 0 16 16"><circle cx="8" cy="8.500" r="6" fill="#7f96cb" stroke="#4f66a0" stroke-width=".8"/><path d="M8 8.500V2.500A6 6 0 0 1 14 8.500z" fill="#c5d2ec"/><circle cx="8" cy="8.500" r="2.400" fill="#fff" stroke="#4f66a0" stroke-width=".8"/></svg>
<div class="li" style="top:435.5px">圆环图</div>
<svg style="left:242px;top:457.5px" width="16" height="16" viewBox="0 0 16 16"><circle cx="5" cy="4.500" r="3.200" fill="#6f88c4" stroke="#4f66a0" stroke-width=".7"/><circle cx="4" cy="3.500" r="1.200" fill="#b9c9e8"/><circle cx="11.500" cy="5.500" r="1.700" fill="#eef2fa" stroke="#4f66a0"/><circle cx="5" cy="12" r="1.700" fill="#eef2fa" stroke="#4f66a0"/><circle cx="11.500" cy="11.500" r="2" fill="#9fb3dc" stroke="#4f66a0"/></svg>
<div class="li" style="top:459.5px">气泡图</div>
<svg style="left:242px;top:481.5px" width="16" height="16" viewBox="0 0 16 16"><path d="M8 .8L15.300 6.200L12.500 14.800H3.500L.7 6.200z" fill="#dfe7f5" stroke="#4f66a0"/><path d="M8 .8V8.500L15.300 6.200M8 8.500L12.500 14.800M8 8.500L3.500 14.800M8 8.500L.7 6.200" fill="none" stroke="#4f66a0" stroke-width=".7"/><path d="M8 3L12.500 7L10.500 12.500L5 11.500L3.500 6.500z" fill="#9fb3dc" fill-opacity=".6" stroke="#3f5590" stroke-width="1"/></svg>
<div class="li" style="top:483.5px">雷达图</div>
<div id="gal" class="a"></div>
<div class="gh" style="top:378px">折线图</div><div class="gh" style="top:452px">饼图</div>
<div id="gsel" class="a"></div>
<div class="gi" style="left:382px;top:214px"><svg width="46" height="46" viewBox="0 0 46 46"><path d="M5.5 8V39.5H41" fill="none" stroke="#55638c" stroke-width="1"/><rect x="10" y="22" width="5.5" height="17.5" fill="url(#glv)" stroke="#8fa3cb" stroke-width="0.7"/><rect x="15.6" y="13.5" width="5.8" height="26" fill="url(#gdv)" stroke="#4e69a3" stroke-width="0.7"/><rect x="25.5" y="16" width="5.8" height="23.5" fill="url(#glv)" stroke="#8fa3cb" stroke-width="0.7"/><rect x="31.4" y="22" width="5.8" height="17.5" fill="url(#gdv)" stroke="#4e69a3" stroke-width="0.7"/></svg></div>
<div class="gi" style="left:438px;top:214px"><svg width="46" height="46" viewBox="0 0 46 46"><path d="M5.5 8V39.5H41" fill="none" stroke="#55638c" stroke-width="1"/><rect x="11.5" y="30.5" width="9.5" height="9" fill="url(#glv)" stroke="#8fa3cb" stroke-width="0.7"/><rect x="11.5" y="18.3" width="9.5" height="12.2" fill="url(#gdv)" stroke="#4e69a3" stroke-width="0.7"/><rect x="26.4" y="22.7" width="9.5" height="16.8" fill="url(#glv)" stroke="#8fa3cb" stroke-width="0.7"/><rect x="26.4" y="9.6" width="9.5" height="13.1" fill="url(#gdv)" stroke="#4e69a3" stroke-width="0.7"/></svg></div>
<div class="gi" style="left:494px;top:214px"><svg width="46" height="46" viewBox="0 0 46 46"><path d="M5.5 8V39.5H41" fill="none" stroke="#55638c" stroke-width="1"/><rect x="11.6" y="25.5" width="9.5" height="14" fill="url(#glv)" stroke="#8fa3cb" stroke-width="0.7"/><rect x="11.6" y="9.6" width="9.5" height="15.9" fill="url(#gdv)" stroke="#4e69a3" stroke-width="0.7"/><rect x="26.2" y="21.8" width="9.5" height="17.7" fill="url(#glv)" stroke="#8fa3cb" stroke-width="0.7"/><rect x="26.2" y="9.6" width="9.5" height="12.2" fill="url(#gdv)" stroke="#4e69a3" stroke-width="0.7"/></svg></div>
<div class="gi" style="left:550px;top:214px"><svg width="46" height="46" viewBox="0 0 46 46"><path d="M7.5 7V34.5H41M7.5 34.5L1.5 39.5" fill="none" stroke="#55638c" stroke-width="1"/><path d="M9.5 23l2.4 -2.4h5.5l-2.4 2.4z" fill="#f2f6fc" stroke="#7f95c4" stroke-width=".8" stroke-linejoin="round"/><path d="M15.0 23l2.4 -2.4v16l-2.4 2.4z" fill="#b7c8e6" stroke="#7f95c4" stroke-width=".8" stroke-linejoin="round"/><rect x="9.5" y="23" width="5.5" height="16" fill="url(#glv)" stroke="#7f95c4" stroke-width=".8"/><path d="M15 13l2.4 -2.4h5.5l-2.4 2.4z" fill="#96aedb" stroke="#46609c" stroke-width=".8" stroke-linejoin="round"/><path d="M20.5 13l2.4 -2.4v26l-2.4 2.4z" fill="#5873ae" stroke="#46609c" stroke-width=".8" stroke-linejoin="round"/><rect x="15" y="13" width="5.5" height="26" fill="url(#gdv)" stroke="#46609c" stroke-width=".8"/><path d="M26 17.5l2.4 -2.4h5.5l-2.4 2.4z" fill="#f2f6fc" stroke="#7f95c4" stroke-width=".8" stroke-linejoin="round"/><path d="M31.5 17.5l2.4 -2.4v21.5l-2.4 2.4z" fill="#b7c8e6" stroke="#7f95c4" stroke-width=".8" stroke-linejoin="round"/><rect x="26" y="17.5" width="5.5" height="21.5" fill="url(#glv)" stroke="#7f95c4" stroke-width=".8"/><path d="M31.5 23.5l2.4 -2.4h5.5l-2.4 2.4z" fill="#96aedb" stroke="#46609c" stroke-width=".8" stroke-linejoin="round"/><path d="M37.0 23.5l2.4 -2.4v15.5l-2.4 2.4z" fill="#5873ae" stroke="#46609c" stroke-width=".8" stroke-linejoin="round"/><rect x="31.5" y="23.5" width="5.5" height="15.5" fill="url(#gdv)" stroke="#46609c" stroke-width=".8"/></svg></div>
<div class="gi" style="left:606px;top:214px"><svg width="46" height="46" viewBox="0 0 46 46"><path d="M7.5 7V34.5H41M7.5 34.5L1.5 39.5" fill="none" stroke="#55638c" stroke-width="1"/><path d="M10.5 31l3.5 -3.5h9.5l-3.5 3.5z" fill="#f2f6fc" stroke="#7f95c4" stroke-width=".8" stroke-linejoin="round"/><path d="M20.0 31l3.5 -3.5v8.5l-3.5 3.5z" fill="#b7c8e6" stroke="#7f95c4" stroke-width=".8" stroke-linejoin="round"/><rect x="10.5" y="31" width="9.5" height="8.5" fill="url(#glv)" stroke="#7f95c4" stroke-width=".8"/><path d="M10.5 19l3.5 -3.5h9.5l-3.5 3.5z" fill="#96aedb" stroke="#46609c" stroke-width=".8" stroke-linejoin="round"/><path d="M20.0 19l3.5 -3.5v12l-3.5 3.5z" fill="#5873ae" stroke="#46609c" stroke-width=".8" stroke-linejoin="round"/><rect x="10.5" y="19" width="9.5" height="12" fill="url(#gdv)" stroke="#46609c" stroke-width=".8"/><path d="M26 22.5l3.5 -3.5h9.5l-3.5 3.5z" fill="#f2f6fc" stroke="#7f95c4" stroke-width=".8" stroke-linejoin="round"/><path d="M35.5 22.5l3.5 -3.5v17l-3.5 3.5z" fill="#b7c8e6" stroke="#7f95c4" stroke-width=".8" stroke-linejoin="round"/><rect x="26" y="22.5" width="9.5" height="17" fill="url(#glv)" stroke="#7f95c4" stroke-width=".8"/><path d="M26 10l3.5 -3.5h9.5l-3.5 3.5z" fill="#96aedb" stroke="#46609c" stroke-width=".8" stroke-linejoin="round"/><path d="M35.5 10l3.5 -3.5v12.5l-3.5 3.5z" fill="#5873ae" stroke="#46609c" stroke-width=".8" stroke-linejoin="round"/><rect x="26" y="10" width="9.5" height="12.5" fill="url(#gdv)" stroke="#46609c" stroke-width=".8"/></svg></div>
<div class="gi" style="left:662px;top:214px"><svg width="46" height="46" viewBox="0 0 46 46"><path d="M7.5 7V34.5H41M7.5 34.5L1.5 39.5" fill="none" stroke="#55638c" stroke-width="1"/><path d="M10.5 25.5l3.5 -3.5h9.5l-3.5 3.5z" fill="#f2f6fc" stroke="#7f95c4" stroke-width=".8" stroke-linejoin="round"/><path d="M20.0 25.5l3.5 -3.5v14l-3.5 3.5z" fill="#b7c8e6" stroke="#7f95c4" stroke-width=".8" stroke-linejoin="round"/><rect x="10.5" y="25.5" width="9.5" height="14" fill="url(#glv)" stroke="#7f95c4" stroke-width=".8"/><path d="M10.5 10l3.5 -3.5h9.5l-3.5 3.5z" fill="#96aedb" stroke="#46609c" stroke-width=".8" stroke-linejoin="round"/><path d="M20.0 10l3.5 -3.5v15.5l-3.5 3.5z" fill="#5873ae" stroke="#46609c" stroke-width=".8" stroke-linejoin="round"/><rect x="10.5" y="10" width="9.5" height="15.5" fill="url(#gdv)" stroke="#46609c" stroke-width=".8"/><path d="M27 21.5l3.5 -3.5h9.5l-3.5 3.5z" fill="#f2f6fc" stroke="#7f95c4" stroke-width=".8" stroke-linejoin="round"/><path d="M36.5 21.5l3.5 -3.5v18l-3.5 3.5z" fill="#b7c8e6" stroke="#7f95c4" stroke-width=".8" stroke-linejoin="round"/><rect x="27" y="21.5" width="9.5" height="18" fill="url(#glv)" stroke="#7f95c4" stroke-width=".8"/><path d="M27 10l3.5 -3.5h9.5l-3.5 3.5z" fill="#96aedb" stroke="#46609c" stroke-width=".8" stroke-linejoin="round"/><path d="M36.5 10l3.5 -3.5v11.5l-3.5 3.5z" fill="#5873ae" stroke="#46609c" stroke-width=".8" stroke-linejoin="round"/><rect x="27" y="10" width="9.5" height="11.5" fill="url(#gdv)" stroke="#46609c" stroke-width=".8"/></svg></div>
<div class="gi" style="left:718px;top:214px"><svg width="46" height="46" viewBox="0 0 46 46"><path d="M7.5 6V31.5H41M7.5 31.5L1.5 36.5" fill="none" stroke="#55638c" stroke-width="1"/><path d="M12 8l2.2 -2.2h6l-2.2 2.2z" fill="#96aedb" stroke="#46609c" stroke-width=".8" stroke-linejoin="round"/><path d="M18 8l2.2 -2.2v25l-2.2 2.2z" fill="#5873ae" stroke="#46609c" stroke-width=".8" stroke-linejoin="round"/><rect x="12" y="8" width="6" height="25" fill="url(#gdv)" stroke="#46609c" stroke-width=".8"/><path d="M30 7l2.2 -2.2h6l-2.2 2.2z" fill="#96aedb" stroke="#46609c" stroke-width=".8" stroke-linejoin="round"/><path d="M36 7l2.2 -2.2v26l-2.2 2.2z" fill="#5873ae" stroke="#46609c" stroke-width=".8" stroke-linejoin="round"/><rect x="30" y="7" width="6" height="26" fill="url(#gdv)" stroke="#46609c" stroke-width=".8"/><path d="M5.5 22l2.2 -2.2h6l-2.2 2.2z" fill="#f2f6fc" stroke="#7f95c4" stroke-width=".8" stroke-linejoin="round"/><path d="M11.5 22l2.2 -2.2v17l-2.2 2.2z" fill="#b7c8e6" stroke="#7f95c4" stroke-width=".8" stroke-linejoin="round"/><rect x="5.5" y="22" width="6" height="17" fill="url(#glv)" stroke="#7f95c4" stroke-width=".8"/><path d="M23.5 15.5l2.2 -2.2h6l-2.2 2.2z" fill="#f2f6fc" stroke="#7f95c4" stroke-width=".8" stroke-linejoin="round"/><path d="M29.5 15.5l2.2 -2.2v23.5l-2.2 2.2z" fill="#b7c8e6" stroke="#7f95c4" stroke-width=".8" stroke-linejoin="round"/><rect x="23.5" y="15.5" width="6" height="23.5" fill="url(#glv)" stroke="#7f95c4" stroke-width=".8"/></svg></div>
<div class="gi" style="left:382px;top:270px"><svg width="46" height="46" viewBox="0 0 46 46"><path d="M7.5 7V34.5H42M7.5 34.5L1.5 39.5" fill="none" stroke="#55638c" stroke-width="1"/><path d="M9.5 22.5V38.5A3 1.8 0 0 0 15.5 38.5V22.5z" fill="url(#gl)" stroke="#8fa3cb" stroke-width=".6"/><ellipse cx="12.5" cy="22.5" rx="3" ry="1.8" fill="#f1f5fc" stroke="#8fa3cb" stroke-width=".6"/><path d="M16.2 12.5V38.5A3.3 1.8 0 0 0 22.8 38.5V12.5z" fill="url(#gd)" stroke="#4e69a3" stroke-width=".6"/><ellipse cx="19.5" cy="12.5" rx="3.3" ry="1.8" fill="#8aa3d2" stroke="#4e69a3" stroke-width=".6"/><path d="M26.3 16.5V38.5A3.2 1.8 0 0 0 32.7 38.5V16.5z" fill="url(#gl)" stroke="#8fa3cb" stroke-width=".6"/><ellipse cx="29.5" cy="16.5" rx="3.2" ry="1.8" fill="#f1f5fc" stroke="#8fa3cb" stroke-width=".6"/><path d="M33.8 24.5V38.5A3.2 1.8 0 0 0 40.2 38.5V24.5z" fill="url(#gd)" stroke="#4e69a3" stroke-width=".6"/><ellipse cx="37" cy="24.5" rx="3.2" ry="1.8" fill="#8aa3d2" stroke="#4e69a3" stroke-width=".6"/></svg></div>
<div class="gi" style="left:438px;top:270px"><svg width="46" height="46" viewBox="0 0 46 46"><path d="M7.5 7V34.5H42M7.5 34.5L1.5 39.5" fill="none" stroke="#55638c" stroke-width="1"/><path d="M13.2 30.5V38.5A4.3 1.8 0 0 0 21.8 38.5V30.5z" fill="url(#gl)" stroke="#8fa3cb" stroke-width=".6"/><path d="M13.2 20V30.5A4.3 1.8 0 0 0 21.8 30.5V20z" fill="url(#gd)" stroke="#4e69a3" stroke-width=".6"/><ellipse cx="17.5" cy="20" rx="4.3" ry="1.8" fill="#8aa3d2" stroke="#4e69a3" stroke-width=".6"/><path d="M26.2 23V38.5A4.3 1.8 0 0 0 34.8 38.5V23z" fill="url(#gl)" stroke="#8fa3cb" stroke-width=".6"/><path d="M26.2 9.5V23A4.3 1.8 0 0 0 34.8 23V9.5z" fill="url(#gd)" stroke="#4e69a3" stroke-width=".6"/><ellipse cx="30.5" cy="9.5" rx="4.3" ry="1.8" fill="#8aa3d2" stroke="#4e69a3" stroke-width=".6"/></svg></div>
<div class="gi" style="left:494px;top:270px"><svg width="46" height="46" viewBox="0 0 46 46"><path d="M7.5 7V34.5H42M7.5 34.5L1.5 39.5" fill="none" stroke="#55638c" stroke-width="1"/><path d="M13.2 30V38.5A4.3 1.8 0 0 0 21.8 38.5V30z" fill="url(#gl)" stroke="#8fa3cb" stroke-width=".6"/><path d="M13.2 9.5V30A4.3 1.8 0 0 0 21.8 30V9.5z" fill="url(#gd)" stroke="#4e69a3" stroke-width=".6"/><ellipse cx="17.5" cy="9.5" rx="4.3" ry="1.8" fill="#8aa3d2" stroke="#4e69a3" stroke-width=".6"/><path d="M26.2 23V38.5A4.3 1.8 0 0 0 34.8 38.5V23z" fill="url(#gl)" stroke="#8fa3cb" stroke-width=".6"/><path d="M26.2 9.5V23A4.3 1.8 0 0 0 34.8 23V9.5z" fill="url(#gd)" stroke="#4e69a3" stroke-width=".6"/><ellipse cx="30.5" cy="9.5" rx="4.3" ry="1.8" fill="#8aa3d2" stroke="#4e69a3" stroke-width=".6"/></svg></div>
<div class="gi" style="left:550px;top:270px"><svg width="46" height="46" viewBox="0 0 46 46"><path d="M9.5 6V28.5H42M9.5 28.5L3.5 33.5" fill="none" stroke="#55638c" stroke-width="1"/><path d="M13.7 11.5V31A4.3 1.8 0 0 0 22.3 31V11.5z" fill="url(#gd)" stroke="#4e69a3" stroke-width=".6"/><ellipse cx="18" cy="11.5" rx="4.3" ry="1.8" fill="#8aa3d2" stroke="#4e69a3" stroke-width=".6"/><path d="M31.7 7.5V31A4.3 1.8 0 0 0 40.3 31V7.5z" fill="url(#gd)" stroke="#4e69a3" stroke-width=".6"/><ellipse cx="36" cy="7.5" rx="4.3" ry="1.8" fill="#8aa3d2" stroke="#4e69a3" stroke-width=".6"/><path d="M6.2 22V37A4.3 1.8 0 0 0 14.8 37V22z" fill="url(#gl)" stroke="#8fa3cb" stroke-width=".6"/><ellipse cx="10.5" cy="22" rx="4.3" ry="1.8" fill="#f1f5fc" stroke="#8fa3cb" stroke-width=".6"/><path d="M24.2 18.5V37A4.3 1.8 0 0 0 32.8 37V18.5z" fill="url(#gl)" stroke="#8fa3cb" stroke-width=".6"/><ellipse cx="28.5" cy="18.5" rx="4.3" ry="1.8" fill="#f1f5fc" stroke="#8fa3cb" stroke-width=".6"/></svg></div>
<div class="gi" style="left:606px;top:270px"><svg width="46" height="46" viewBox="0 0 46 46"><path d="M7.5 7V34.5H42M7.5 34.5L1.5 39.5" fill="none" stroke="#55638c" stroke-width="1"/><path d="M11.5 22L8.0 38A3.5 1.8 0 0 0 15.0 38z" fill="url(#gl)" stroke="#8fa3cb" stroke-width=".6"/><path d="M19.5 10L15.3 38A4.2 1.8 0 0 0 23.7 38z" fill="url(#gd)" stroke="#4e69a3" stroke-width=".6"/><path d="M29.5 18L25.7 38A3.8 1.8 0 0 0 33.3 38z" fill="url(#gl)" stroke="#8fa3cb" stroke-width=".6"/><path d="M37.5 26L34.0 38A3.5 1.8 0 0 0 41.0 38z" fill="url(#gd)" stroke="#4e69a3" stroke-width=".6"/></svg></div>
<div class="gi" style="left:662px;top:270px"><svg width="46" height="46" viewBox="0 0 46 46"><path d="M7.5 7V34.5H42M7.5 34.5L1.5 39.5" fill="none" stroke="#55638c" stroke-width="1"/><path d="M14.9 30L12.5 38.5A5 1.8 0 0 0 22.5 38.5L20.1 30z" fill="url(#gl)" stroke="#8fa3cb" stroke-width=".6"/><path d="M17.5 18.5L14.9 30A2.6 1 0 0 0 20.1 30z" fill="url(#gd)" stroke="#4e69a3" stroke-width=".6"/><path d="M28.1 24L25.4 38.5A5.6 1.8 0 0 0 36.6 38.5L33.9 24z" fill="url(#gl)" stroke="#8fa3cb" stroke-width=".6"/><path d="M31 6L28.1 24A2.9 1 0 0 0 33.9 24z" fill="url(#gd)" stroke="#4e69a3" stroke-width=".6"/></svg></div>
<div class="gi" style="left:718px;top:270px"><svg width="46" height="46" viewBox="0 0 46 46"><path d="M7.5 7V34.5H42M7.5 34.5L1.5 39.5" fill="none" stroke="#55638c" stroke-width="1"/><path d="M14.3 30L12.4 38.5A5.6 1.8 0 0 0 23.6 38.5L21.7 30z" fill="url(#gl)" stroke="#8fa3cb" stroke-width=".6"/><path d="M18 6L14.3 30A3.7 1.2 0 0 0 21.7 30z" fill="url(#gd)" stroke="#4e69a3" stroke-width=".6"/><path d="M29.3 24L26.4 38.5A5.6 1.8 0 0 0 37.6 38.5L34.7 24z" fill="url(#gl)" stroke="#8fa3cb" stroke-width=".6"/><path d="M32 6L29.3 24A2.7 1 0 0 0 34.7 24z" fill="url(#gd)" stroke="#4e69a3" stroke-width=".6"/></svg></div>
<div class="gi" style="left:382px;top:326px"><svg width="46" height="46" viewBox="0 0 46 46"><path d="M9.5 6V28.5H42M9.5 28.5L3.5 33.5" fill="none" stroke="#55638c" stroke-width="1"/><path d="M17.5 10L12.5 30.5A5 1.8 0 0 0 22.5 30.5z" fill="url(#gd)" stroke="#4e69a3" stroke-width=".6"/><path d="M35.5 4.5L30.0 30.5A5.5 1.8 0 0 0 41.0 30.5z" fill="url(#gd)" stroke="#4e69a3" stroke-width=".6"/><path d="M11.5 20L6.0 36A5.5 1.8 0 0 0 17.0 36z" fill="url(#gl)" stroke="#8fa3cb" stroke-width=".6"/><path d="M28.5 17L23.0 36A5.5 1.8 0 0 0 34.0 36z" fill="url(#gl)" stroke="#8fa3cb" stroke-width=".6"/></svg></div>
<div class="gi" style="left:438px;top:326px"><svg width="46" height="46" viewBox="0 0 46 46"><path d="M7.5 7V34.5H42M7.5 34.5L1.5 39.5" fill="none" stroke="#55638c" stroke-width="1"/><path d="M11 22L7 37L12.0 39.5z" fill="#e6edf9" stroke="#8fa3cb" stroke-width=".5"/><path d="M11 22L12.0 39.5L15 36.0z" fill="#b1c4e5" stroke="#8fa3cb" stroke-width=".5"/><path d="M18.5 9L13.5 37L19.75 39.5z" fill="#a4b9e0" stroke="#4e69a3" stroke-width=".5"/><path d="M18.5 9L19.75 39.5L23.5 36.0z" fill="#5a78b3" stroke="#4e69a3" stroke-width=".5"/><path d="M29.5 16L24.9 37L30.65 39.5z" fill="#e6edf9" stroke="#8fa3cb" stroke-width=".5"/><path d="M29.5 16L30.65 39.5L34.1 36.0z" fill="#b1c4e5" stroke="#8fa3cb" stroke-width=".5"/><path d="M37 22L32.4 37L38.15 39.5z" fill="#a4b9e0" stroke="#4e69a3" stroke-width=".5"/><path d="M37 22L38.15 39.5L41.6 36.0z" fill="#5a78b3" stroke="#4e69a3" stroke-width=".5"/></svg></div>
<div class="gi" style="left:494px;top:326px"><svg width="46" height="46" viewBox="0 0 46 46"><path d="M7.5 7V34.5H42M7.5 34.5L1.5 39.5" fill="none" stroke="#55638c" stroke-width="1"/><path d="M13.4 30L10.5 37.5L18.625 40.0L17.9 31.384615384615383z" fill="#e6edf9" stroke="#8fa3cb" stroke-width=".5"/><path d="M17.9 31.384615384615383L18.625 40.0L23.5 36.5L20.6 29.446153846153845z" fill="#b1c4e5" stroke="#8fa3cb" stroke-width=".5"/><path d="M17 19L13.4 30L17.9 31.4z" fill="#a4b9e0" stroke="#4e69a3" stroke-width=".5"/><path d="M17 19L17.9 31.4L20.6 29.44z" fill="#5a78b3" stroke="#4e69a3" stroke-width=".5"/><path d="M27.3 23L24 37.5L32.75 40.0L31.925 24.321428571428573z" fill="#e6edf9" stroke="#8fa3cb" stroke-width=".5"/><path d="M31.925 24.321428571428573L32.75 40.0L38 36.5L34.7 22.47142857142857z" fill="#b1c4e5" stroke="#8fa3cb" stroke-width=".5"/><path d="M31 6.5L27.3 23L31.925 24.4z" fill="#a4b9e0" stroke="#4e69a3" stroke-width=".5"/><path d="M31 6.5L31.925 24.4L34.7 22.44z" fill="#5a78b3" stroke="#4e69a3" stroke-width=".5"/></svg></div>
<div class="gi" style="left:550px;top:326px"><svg width="46" height="46" viewBox="0 0 46 46"><path d="M7.5 7V34.5H42M7.5 34.5L1.5 39.5" fill="none" stroke="#55638c" stroke-width="1"/><path d="M12.4 30L10.2 37.5L18.7 40.0L18.15 31.691176470588236z" fill="#e6edf9" stroke="#8fa3cb" stroke-width=".5"/><path d="M18.15 31.691176470588236L18.7 40.0L23.8 36.5L21.6 29.323529411764707z" fill="#b1c4e5" stroke="#8fa3cb" stroke-width=".5"/><path d="M17 7L12.4 30L18.15 31.7z" fill="#a4b9e0" stroke="#4e69a3" stroke-width=".5"/><path d="M17 7L18.15 31.7L21.6 29.32z" fill="#5a78b3" stroke="#4e69a3" stroke-width=".5"/><path d="M28.6 24L25.2 37.5L33.7 40.0L32.85 25.25z" fill="#e6edf9" stroke="#8fa3cb" stroke-width=".5"/><path d="M32.85 25.25L33.7 40.0L38.8 36.5L35.4 23.5z" fill="#b1c4e5" stroke="#8fa3cb" stroke-width=".5"/><path d="M32 6.5L28.6 24L32.85 25.4z" fill="#a4b9e0" stroke="#4e69a3" stroke-width=".5"/><path d="M32 6.5L32.85 25.4L35.4 23.44z" fill="#5a78b3" stroke="#4e69a3" stroke-width=".5"/></svg></div>
<div class="gi" style="left:606px;top:326px"><svg width="46" height="46" viewBox="0 0 46 46"><path d="M9.5 6V28.5H42M9.5 28.5L3.5 33.5" fill="none" stroke="#55638c" stroke-width="1"/><path d="M17.5 11L12.5 30L18.75 32.5z" fill="#a4b9e0" stroke="#4e69a3" stroke-width=".5"/><path d="M17.5 11L18.75 32.5L22.5 29.0z" fill="#5a78b3" stroke="#4e69a3" stroke-width=".5"/><path d="M35 5.5L29.5 30L36.375 32.5z" fill="#a4b9e0" stroke="#4e69a3" stroke-width=".5"/><path d="M35 5.5L36.375 32.5L40.5 29.0z" fill="#5a78b3" stroke="#4e69a3" stroke-width=".5"/><path d="M10 22L5 36L11.25 38.5z" fill="#e6edf9" stroke="#8fa3cb" stroke-width=".5"/><path d="M10 22L11.25 38.5L15 35.0z" fill="#b1c4e5" stroke="#8fa3cb" stroke-width=".5"/><path d="M26.5 15L21.5 36L27.75 38.5z" fill="#e6edf9" stroke="#8fa3cb" stroke-width=".5"/><path d="M26.5 15L27.75 38.5L31.5 35.0z" fill="#b1c4e5" stroke="#8fa3cb" stroke-width=".5"/></svg></div>
<div class="gi" style="left:382px;top:400px"><svg width="46" height="46" viewBox="0 0 46 46"><path d="M5.5 7V38.5H41" fill="none" stroke="#55638c" stroke-width="1"/><path d="M6 35L23 14.5L30 16L39 25" fill="none" stroke="#b4bfd8" stroke-width="1"/><path d="M6 28L17 19L28 25L40 11" fill="none" stroke="#6d7ba6" stroke-width="1"/></svg></div>
<div class="gi" style="left:438px;top:400px"><svg width="46" height="46" viewBox="0 0 46 46"><path d="M5.5 7V38.5H41" fill="none" stroke="#55638c" stroke-width="1"/><path d="M6 25L17 15L27 19L40 9" fill="none" stroke="#98a5c6" stroke-width="1"/><path d="M6 33L17 21L27 29L40 16" fill="none" stroke="#6d7ba6" stroke-width="1"/></svg></div>
<div class="gi" style="left:494px;top:400px"><svg width="46" height="46" viewBox="0 0 46 46"><path d="M5.5 7V38.5H41" fill="none" stroke="#55638c" stroke-width="1"/><path d="M6 8.5L38 8.5" fill="none" stroke="#a5b0cc" stroke-width="1.4"/><path d="M6 31L17 21L28 28L40 15" fill="none" stroke="#6d7ba6" stroke-width="1"/></svg></div>
<div class="gi" style="left:550px;top:400px"><svg width="46" height="46" viewBox="0 0 46 46"><path d="M5.5 7V38.5H41" fill="none" stroke="#55638c" stroke-width="1"/><path d="M5.5 26.5L11.5 21L18.5 15L25.5 22L32.5 15.5L39 10" fill="none" stroke="#7b88ae" stroke-width="1"/><path d="M5.5 35.5L11.5 29.5L18.5 23.5L25.5 15L32.5 21.5L39 27.5" fill="none" stroke="#7b88ae" stroke-width="1"/><rect x="4.2" y="25.2" width="2.6" height="2.6" fill="#5b6b98"/><rect x="10.2" y="19.7" width="2.6" height="2.6" fill="#5b6b98"/><rect x="17.2" y="13.7" width="2.6" height="2.6" fill="#5b6b98"/><rect x="24.2" y="20.7" width="2.6" height="2.6" fill="#5b6b98"/><rect x="31.2" y="14.2" width="2.6" height="2.6" fill="#5b6b98"/><rect x="37.7" y="8.7" width="2.6" height="2.6" fill="#5b6b98"/><rect x="4.2" y="34.2" width="2.6" height="2.6" fill="#5b6b98"/><rect x="10.2" y="28.2" width="2.6" height="2.6" fill="#5b6b98"/><rect x="17.2" y="22.2" width="2.6" height="2.6" fill="#5b6b98"/><rect x="24.2" y="13.7" width="2.6" height="2.6" fill="#5b6b98"/><rect x="31.2" y="20.2" width="2.6" height="2.6" fill="#5b6b98"/><rect x="37.7" y="26.2" width="2.6" height="2.6" fill="#5b6b98"/></svg></div>
<div class="gi" style="left:606px;top:400px"><svg width="46" height="46" viewBox="0 0 46 46"><path d="M5.5 7V38.5H41" fill="none" stroke="#55638c" stroke-width="1"/><path d="M5.5 24.5L11.5 18L18.5 12L25.5 18L32.5 23.5L39.5 16" fill="none" stroke="#98a5c6" stroke-width="1"/><path d="M5.5 34.5L11.5 28.5L18.5 22.5L25.5 28.5L32.5 33.5L39.5 26.5" fill="none" stroke="#5b6b98" stroke-width="1"/><rect x="4.2" y="23.2" width="2.6" height="2.6" fill="#7f8db4"/><rect x="10.2" y="16.7" width="2.6" height="2.6" fill="#7f8db4"/><rect x="17.2" y="10.7" width="2.6" height="2.6" fill="#7f8db4"/><rect x="24.2" y="16.7" width="2.6" height="2.6" fill="#7f8db4"/><rect x="31.2" y="22.2" width="2.6" height="2.6" fill="#7f8db4"/><rect x="38.2" y="14.7" width="2.6" height="2.6" fill="#7f8db4"/><rect x="4.2" y="33.2" width="2.6" height="2.6" fill="#5b6b98"/><rect x="10.2" y="27.2" width="2.6" height="2.6" fill="#5b6b98"/><rect x="17.2" y="21.2" width="2.6" height="2.6" fill="#5b6b98"/><rect x="24.2" y="27.2" width="2.6" height="2.6" fill="#5b6b98"/><rect x="31.2" y="32.2" width="2.6" height="2.6" fill="#5b6b98"/><rect x="38.2" y="25.2" width="2.6" height="2.6" fill="#5b6b98"/></svg></div>
<div class="gi" style="left:662px;top:400px"><svg width="46" height="46" viewBox="0 0 46 46"><path d="M5.5 7V38.5H41" fill="none" stroke="#55638c" stroke-width="1"/><path d="M5.5 8.5H39.5" stroke="#7b88ae" stroke-dasharray="2 1.5"/><path d="M5.5 34.5L11.5 28.5L18.5 21.5L25.5 30.5L32.5 25.5L39.5 18.5" fill="none" stroke="#6d7ba6" stroke-width="1"/><rect x="4.2" y="7.2" width="2.6" height="2.6" fill="#5b6b98"/><rect x="10.2" y="7.2" width="2.6" height="2.6" fill="#5b6b98"/><rect x="17.2" y="7.2" width="2.6" height="2.6" fill="#5b6b98"/><rect x="24.2" y="7.2" width="2.6" height="2.6" fill="#5b6b98"/><rect x="31.2" y="7.2" width="2.6" height="2.6" fill="#5b6b98"/><rect x="38.2" y="7.2" width="2.6" height="2.6" fill="#5b6b98"/><rect x="4.2" y="33.2" width="2.6" height="2.6" fill="#5b6b98"/><rect x="10.2" y="27.2" width="2.6" height="2.6" fill="#5b6b98"/><rect x="17.2" y="20.2" width="2.6" height="2.6" fill="#5b6b98"/><rect x="24.2" y="29.2" width="2.6" height="2.6" fill="#5b6b98"/><rect x="31.2" y="24.2" width="2.6" height="2.6" fill="#5b6b98"/><rect x="38.2" y="17.2" width="2.6" height="2.6" fill="#5b6b98"/></svg></div>
<div class="gi" style="left:718px;top:400px"><svg width="46" height="46" viewBox="0 0 46 46"><path d="M8.5 5V26.500H41M8.5 26.500L2.5 32" fill="none" stroke="#55638c"/><path d="M11 17L26 7L33 16L41 18L38 21L30 18L24 11L13 19z" fill="#7d93c4" stroke="#5a6fa3" stroke-width=".6"/><path d="M3 24L14 20L24 35L32 28L27 27L23 30L17 21L9 25z" fill="#d5dff1" stroke="#7f90b8" stroke-width=".7"/><path d="M14 20L24 35L24 37L13 22z" fill="#a9b9da" stroke="#7f90b8" stroke-width=".5"/></svg></div>
<div class="gi" style="left:382px;top:474px"><svg width="46" height="46" viewBox="0 0 46 46"><circle cx="23" cy="23.500" r="15.500" fill="url(#gld)" stroke="#7085b5" stroke-width=".8"/><path d="M23 23.500V8A15.500 15.500 0 0 1 33.500 34.900z" fill="url(#gdd)" stroke="#5a6fa3" stroke-width=".7"/></svg></div>
<div class="gi" style="left:438px;top:474px"><svg width="46" height="46" viewBox="0 0 46 46"><path d="M7 21V26A16 8.500 0 0 0 39 26V21z" fill="#6a86bf" stroke="#5a6fa3" stroke-width=".6"/><ellipse cx="23" cy="21" rx="16" ry="8.500" fill="url(#gdd)" stroke="#5a6fa3" stroke-width=".7"/><path d="M23 21L21.500 12.600A16 8.500 0 0 1 39 21A16 8.500 0 0 1 30 28.600z" fill="url(#gld)" stroke="#7f90b8" stroke-width=".6"/><path d="M39 21V26A16 8.500 0 0 1 30 33.600V28.600A16 8.500 0 0 0 39 21z" fill="#c3d2ec" stroke="#7f90b8" stroke-width=".6"/></svg></div>
<div class="gi" style="left:494px;top:474px"><svg width="46" height="46" viewBox="0 0 46 46"><path d="M17 12L37.500 17.500M17 34.500L37.500 28.500" stroke="#66749c" stroke-width=".8"/><circle cx="16" cy="23" r="11.500" fill="url(#gdd)" stroke="#5a6fa3" stroke-width=".7"/><path d="M16 23L22 13.200A11.500 11.500 0 0 1 22 32.800z" fill="#edf2fa" stroke="#7f90b8" stroke-width=".6"/><circle cx="37" cy="23" r="5.500" fill="url(#gld)" stroke="#5a6fa3" stroke-width=".7"/><path d="M37 23V17.500A5.500 5.500 0 0 0 37 28.500z" fill="#6f8ac2" stroke="#5a6fa3" stroke-width=".5"/></svg></div>
<div class="gi" style="left:550px;top:474px"><svg width="46" height="46" viewBox="0 0 46 46"><path d="M20 25V9A15.500 15.500 0 1 0 30.500 36.500z" fill="url(#gld)" stroke="#7f90b8" stroke-width=".8"/><path d="M26 21.500V5.500A15.500 15.500 0 0 1 37 32.500z" fill="url(#gdd)" stroke="#5a6fa3" stroke-width=".7"/></svg></div>
<div class="gi" style="left:606px;top:474px"><svg width="46" height="46" viewBox="0 0 46 46"><path d="M4 22V27A14 8 0 0 0 22 34.500L21 29z" fill="#6a86bf" stroke="#5a6fa3" stroke-width=".6"/><path d="M18 22L17 14A14 8 0 0 0 4 22A14 8 0 0 0 22 29.500z" fill="url(#gdd)" stroke="#5a6fa3" stroke-width=".7"/><path d="M25 20L24.500 12A14 8 0 0 1 40 20A14 8 0 0 1 31 27.500z" fill="url(#gld)" stroke="#7f90b8" stroke-width=".7"/><path d="M40 20V25A14 8 0 0 1 31 32.500V27.500A14 8 0 0 0 40 20zM25 20L31 27.500V32.500L25 25z" fill="#c3d2ec" stroke="#7f90b8" stroke-width=".6"/></svg></div>
<div class="gi" style="left:662px;top:474px"><svg width="46" height="46" viewBox="0 0 46 46"><path d="M18 13L30 14.500M18 33L30 31.500" stroke="#66749c" stroke-width=".8"/><circle cx="15" cy="23" r="11" fill="url(#gdd)" stroke="#5a6fa3" stroke-width=".7"/><path d="M15 23L21.500 14A11 11 0 0 1 21.500 32z" fill="#e6edf8" stroke="#7f90b8" stroke-width=".6"/><rect x="30" y="14.500" width="7.500" height="17" fill="#eef3fb" stroke="#5a6fa3" stroke-width=".8"/><rect x="30" y="21" width="7.500" height="4.500" fill="#6f8ac2" stroke="#5a6fa3" stroke-width=".6"/></svg></div>
<div id="gsb" class="a"></div><div class="sbtn" style="top:215px"></div><div class="sbtn" style="top:509px"></div><div id="gsbthumb" class="a"></div>
<svg style="left:775px;top:219px" width="9" height="7" viewBox="0 0 9 7"><path d="M1 5.500L4.500 2L8 5.500" fill="none" stroke="#4d6185" stroke-width="2"/></svg>
<svg style="left:775px;top:514px" width="9" height="7" viewBox="0 0 9 7"><path d="M1 1.500L4.500 5L8 1.500" fill="none" stroke="#4d6185" stroke-width="2"/></svg>
<svg style="left:776px;top:275px" width="7" height="8" viewBox="0 0 7 8"><path d="M0 .5H7M0 2.500H7M0 4.500H7M0 6.500H7" stroke="#eef3fe"/><path d="M0 1.500H7M0 3.500H7M0 5.500H7M0 7.500H7" stroke="#8ca0d8"/></svg>
<div class="btn" style="left:237px;width:120px">管理模板<span class="hw">(<u>M</u>)...</span></div>
<div class="btn" style="left:368px;width:120px">设置为默认图表<span class="hw">(<u>S</u>)</span></div>
<div class="btn" id="bok" style="left:631px;width:73px">确定</div>
<div class="btn" style="left:715px;width:73px">取消</div>
<svg style="left:782px;top:546px" width="12" height="12" viewBox="0 0 12 12"><path d="M9 1h2v2h-2zM5 5h2v2h-2zM9 5h2v2h-2zM1 9h2v2h-2zM5 9h2v2h-2zM9 9h2v2h-2z" fill="#b8b4a0"/></svg>
</body></html>
